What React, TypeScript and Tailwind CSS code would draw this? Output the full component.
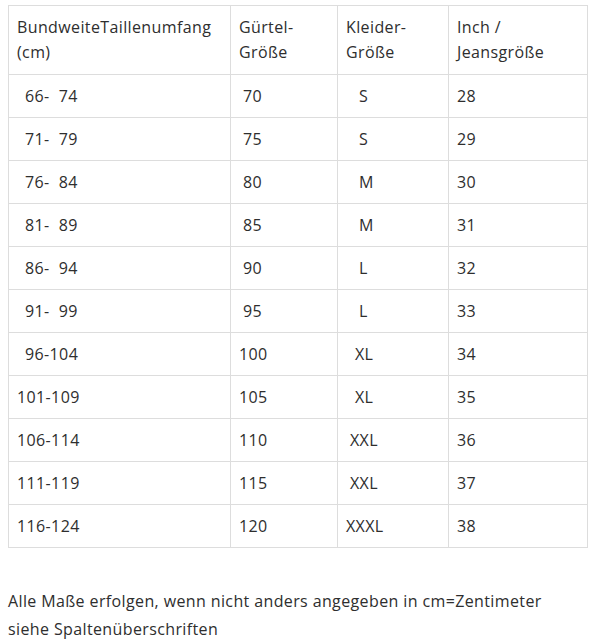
import React from "react";

type Row = { a: string; ao: number; b: string; bo: number; c: string; co: number; d: string };

const rows: Row[] = [
  { a: "66-\u00a0\u00a074", ao: 8, b: "70", bo: 4, c: "S", co: 13, d: "28" },
  { a: "71-\u00a0\u00a079", ao: 8, b: "75", bo: 4, c: "S", co: 13, d: "29" },
  { a: "76-\u00a0\u00a084", ao: 8, b: "80", bo: 4, c: "M", co: 13, d: "30" },
  { a: "81-\u00a0\u00a089", ao: 8, b: "85", bo: 4, c: "M", co: 13, d: "31" },
  { a: "86-\u00a0\u00a094", ao: 8, b: "90", bo: 4, c: "L", co: 13, d: "32" },
  { a: "91-\u00a0\u00a099", ao: 8, b: "95", bo: 4, c: "L", co: 13, d: "33" },
  { a: "96-104", ao: 8, b: "100", bo: 0, c: "XL", co: 9, d: "34" },
  { a: "101-109", ao: 0, b: "105", bo: 0, c: "XL", co: 9, d: "35" },
  { a: "106-114", ao: 0, b: "110", bo: 0, c: "XXL", co: 4, d: "36" },
  { a: "111-119", ao: 0, b: "115", bo: 0, c: "XXL", co: 4, d: "37" },
  { a: "116-124", ao: 0, b: "120", bo: 0, c: "XXXL", co: 0, d: "38" },
];

const cell = "border border-[#dddddd] px-[8px] pt-[9px] pb-[8px] align-middle text-left font-normal";
const head = "border border-[#dddddd] px-[8px] py-[9px] align-middle text-left font-normal";

export default function App() {
  return (
    <div
      className="bg-white pt-[5px] pl-[8px] text-[#2e2e2e] text-[16px] leading-[25px] tracking-[0.38px] min-h-[643px]"
      style={{ fontFamily: '"Open Sans", "Noto Sans", sans-serif' }}
    >
      <table className="border-collapse table-fixed w-[579px]">
        <colgroup>
          <col className="w-[222px]" />
          <col className="w-[107px]" />
          <col className="w-[111px]" />
          <col className="w-[139px]" />
        </colgroup>
        <thead>
          <tr>
            <th className={head}>
              BundweiteTaillenumfang
              <br />
              (cm)
            </th>
            <th className={head}>
              Gürtel-
              <br />
              Größe
            </th>
            <th className={head}>
              Kleider-
              <br />
              Größe
            </th>
            <th className={head}>
              Inch /
              <br />
              Jeansgröße
            </th>
          </tr>
        </thead>
        <tbody>
          {rows.map((r, i) => (
            <tr key={i}>
              <td className={cell}>
                <span className="whitespace-pre" style={{ marginLeft: r.ao }}>{r.a}</span>
              </td>
              <td className={cell}>
                <span style={{ marginLeft: r.bo }}>{r.b}</span>
              </td>
              <td className={cell}>
                <span style={{ marginLeft: r.co }}>{r.c}</span>
              </td>
              <td className={cell}>{r.d}</td>
            </tr>
          ))}
        </tbody>
      </table>
      <p className="mt-[39px] leading-[28px]">
        Alle Maße erfolgen, wenn nicht anders angegeben in cm=Zentimeter
        <br />
        siehe Spaltenüberschriften
      </p>
    </div>
  );
}
